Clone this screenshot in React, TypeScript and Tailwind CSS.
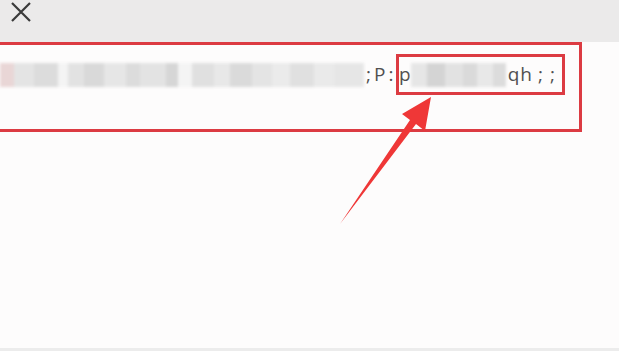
import React from "react";

const blurLeft: [number, string][] = [
  [14, "#e9d6d6"],
  [20, "#e4e4e4"],
  [24, "#dcdcdc"],
  [10, "#f4f4f4"],
  [16, "#e2e2e2"],
  [20, "#d9d9d9"],
  [22, "#e6e6e6"],
  [14, "#dcdcdc"],
  [26, "#e3e3e3"],
  [12, "#d6d6d6"],
  [14, "#f4f4f4"],
  [22, "#e0e0e0"],
  [16, "#e8e8e8"],
  [22, "#dadada"],
  [20, "#e4e4e4"],
  [18, "#ebebeb"],
  [24, "#e0e0e0"],
  [20, "#eaeaea"],
  [30, "#e6e6e6"],
];

const blurMid: [number, string][] = [
  [16, "#e6e6e6"],
  [18, "#d4d4d4"],
  [18, "#e2e2e2"],
  [14, "#dadada"],
  [16, "#e8e8e8"],
  [13, "#dcdcdc"],
];

function Blocks({ items }: { items: [number, string][] }) {
  return (
    <div className="flex h-[24px] blur-[1.5px]">
      {items.map(([w, c], i) => (
        <div key={i} className="h-full" style={{ width: w, backgroundColor: c }} />
      ))}
    </div>
  );
}

export default function App() {
  return (
    <div className="relative w-[619px] h-[351px] overflow-hidden bg-[#fdfcfc] font-['Open_Sans',sans-serif]">
      <div className="h-[42px] bg-[#ebeaea] flex items-start pl-[10px] pt-[2px]">
        <svg width="22" height="21" viewBox="0 0 22 21" className="text-[#3a3a3a]">
          <path d="M2 1 L20 19 M20 1 L2 19" stroke="currentColor" strokeWidth="2.2" fill="none" />
        </svg>
      </div>

      <div className="-ml-[3px] w-[585px] h-[90px] border-[3px] border-[#dc3b42] pt-[9px]">
        <div className="flex items-center text-[19px] text-[#505050] leading-none">
          <Blocks items={blurLeft} />
          <span className="w-[32px] pl-[2px] tracking-[3px]">;P:</span>
          <div className="flex items-center h-[41px] w-[169px] border-[3px] border-[#dc3b42]">
            <span>p</span>
            <Blocks items={blurMid} />
            <span className="ml-[2px] tracking-[1px]">qh</span>
            <span className="ml-[5px] tracking-[7px]">;;</span>
          </div>
        </div>
      </div>

      <svg className="absolute left-0 top-0" width="619" height="351">
        <polygon
          points="431,97 425,131 416,124 340,224 410,120 402,114"
          fill="#ef3737"
        />
      </svg>

      <div className="absolute left-0 bottom-0 w-full h-[3px] bg-[#ececec]" />
    </div>
  );
}
